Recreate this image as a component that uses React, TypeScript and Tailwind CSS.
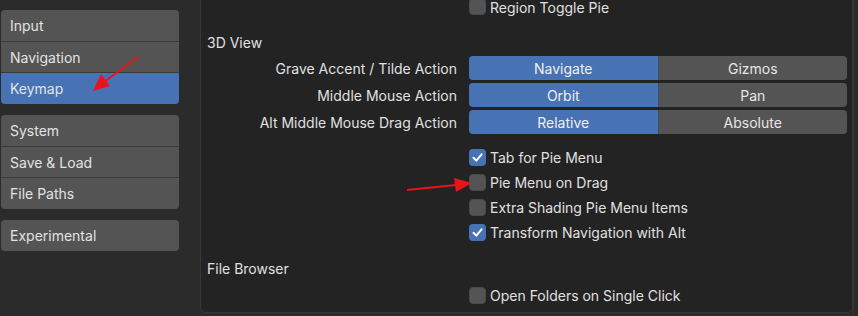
import React from "react";

const font = { fontFamily: "Inter, 'Noto Sans', sans-serif" };

function SideGroup({ items, active }: { items: string[]; active?: string }) {
  return (
    <div className="flex flex-col rounded-[4px] overflow-hidden">
      {items.map((it, i) => (
        <div
          key={it}
          className={
            (i === 0 ? "h-[31px] " : i === 1 ? "h-[31px] border-t border-[#3a3a3a] " : "h-[32px] border-t border-[#3a3a3a] ") +
            (it === active ? "bg-[#4772b3] " : "bg-[#545454] ") +
            "flex items-center pl-[9px] text-[14px] text-[#e2e2e2] box-border"
          }
        >
          {it}
        </div>
      ))}
    </div>
  );
}

function Check({ checked }: { checked?: boolean }) {
  return (
    <div
      className={
        "w-[17px] h-[17px] rounded-[4px] flex items-center justify-center shrink-0 " +
        (checked ? "bg-[#4772b3]" : "bg-[#545454] border border-[#4a4a4a]")
      }
    >
      {checked && (
        <svg width="13" height="13" viewBox="0 0 13 13">
          <path d="M2.5 6.8 L5.3 9.6 L10.6 3.3" fill="none" stroke="#ffffff" strokeWidth="2" strokeLinecap="round" strokeLinejoin="round" />
        </svg>
      )}
    </div>
  );
}

function CheckRow({
  label,
  checked,
  className = "",
  labelClass = "",
}: {
  label: string;
  checked?: boolean;
  className?: string;
  labelClass?: string;
}) {
  return (
    <div className={"flex h-[25px] items-center " + className}>
      <div className="w-[255px] shrink-0" />
      <div className="w-[13px] shrink-0" />
      <div className="flex items-center gap-[4px]">
        <Check checked={checked} />
        <span className={"text-[14px] text-[#e0e0e0] leading-none " + labelClass}>{label}</span>
      </div>
    </div>
  );
}

function EnumRow({ label, a, b }: { label: string; a: string; b: string }) {
  return (
    <div className="flex h-[24px] items-center">
      <div className="w-[256px] shrink-0 text-right text-[14px] text-[#e0e0e0]">{label}</div>
      <div className="w-[12px] shrink-0" />
      <div className="flex w-[378px] h-[24px] rounded-[4px] overflow-hidden">
        <div className="flex-1 bg-[#4772b3] flex items-center justify-center text-[14px] text-[#f0f0f0] border-r border-[#3a4f70]">
          {a}
        </div>
        <div className="flex-1 bg-[#545454] flex items-center justify-center text-[14px] text-[#e6e6e6]">{b}</div>
      </div>
    </div>
  );
}

export default function App() {
  return (
    <div className="relative w-[858px] h-[316px] bg-[#2b2b2b] overflow-hidden flex" style={font}>
      <div className="w-[200px] shrink-0 pl-[1px] pr-[21px] pt-[10px] flex flex-col gap-[11px]">
        <SideGroup items={["Input", "Navigation", "Keymap"]} active="Keymap" />
        <SideGroup items={["System", "Save & Load", "File Paths"]} />
        <SideGroup items={["Experimental"]} />
      </div>
      <div className="w-[653px] h-[313px] shrink-0 bg-[#232323] border-l border-r border-b border-[#363636] rounded-b-[5px] overflow-hidden flex flex-col">
        <CheckRow label="Region Toggle Pie" className="mt-[-6px]" labelClass="mt-[2px]" />
        <div className="mt-[11px] h-[24px] flex items-center pl-[6px] text-[14px] text-[#e0e0e0]">3D View</div>
        <div className="mt-[2px] flex flex-col gap-[3px]">
          <EnumRow label="Grave Accent / Tilde Action" a="Navigate" b="Gizmos" />
          <EnumRow label="Middle Mouse Action" a="Orbit" b="Pan" />
          <EnumRow label="Alt Middle Mouse Drag Action" a="Relative" b="Absolute" />
        </div>
        <div className="mt-[11px] flex flex-col">
          <CheckRow label="Tab for Pie Menu" checked />
          <CheckRow label="Pie Menu on Drag" />
          <CheckRow label="Extra Shading Pie Menu Items" />
          <CheckRow label="Transform Navigation with Alt" checked />
        </div>
        <div className="mt-[11px] h-[24px] flex items-center pl-[6px] text-[14px] text-[#e0e0e0]">File Browser</div>
        <CheckRow label="Open Folders on Single Click" className="mt-[3px]" />
      </div>
      <div className="w-[5px] shrink-0 border-l border-[#333333]" />
      <svg className="absolute left-0 top-0 pointer-events-none" width="858" height="316" viewBox="0 0 858 316">
        <line x1="138" y1="57" x2="104" y2="82" stroke="#e8141a" strokeWidth="2" />
        <polygon points="93,91 101,74 110,86" fill="#e8141a" />
        <line x1="407" y1="190" x2="456" y2="185" stroke="#e8141a" strokeWidth="2" />
        <polygon points="472,183 454,178 456,192" fill="#e8141a" />
      </svg>
    </div>
  );
}
